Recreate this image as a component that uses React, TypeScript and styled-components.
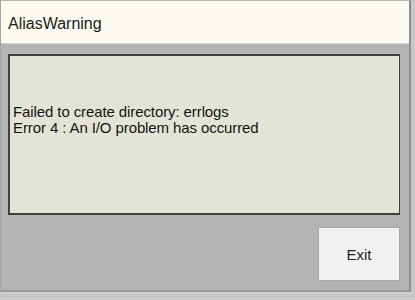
import React from "react";
import styled, { createGlobalStyle } from "styled-components";

const GlobalStyle = createGlobalStyle`
  html, body {
    margin: 0;
    padding: 0;
    background: #c4c4c4;
    font-family: "Liberation Sans", Arial, sans-serif;
  }
`;

const Desktop = styled.div`
  width: 415px;
  height: 300px;
  overflow: hidden;
  background: #c6c6c6;
  display: flex;
  flex-direction: column;
`;

const Window = styled.div`
  width: 411px;
  height: 292px;
  box-sizing: border-box;
  border-top: 1px solid #b8b8b8;
  border-left: 1px solid #a4a4a4;
  border-right: 2px solid #8e8e8e;
  border-bottom: 2px solid #999999;
  background: #b4b4b4;
  display: flex;
  flex-direction: column;
`;

const TitleBar = styled.div`
  height: 43px;
  flex-shrink: 0;
  box-sizing: border-box;
  background: #fdfaf1;
  border-bottom: 1px solid #d8d6cf;
  padding: 3px 0 0 7px;
  display: flex;
  align-items: center;
  font-size: 16px;
  color: #1a1a1a;
`;

const Body = styled.div`
  flex: 1;
  display: flex;
  flex-direction: column;
  padding: 10px 9px 0 7px;
`;

const MessagePanel = styled.div`
  height: 161px;
  box-sizing: border-box;
  background: #e3e4d7;
  border: 2px solid #3f403c;
  border-right-width: 1px;
  display: flex;
  flex-direction: column;
  padding: 48px 0 0 3px;
`;

const MessageLine = styled.div`
  font-size: 15px;
  line-height: 16px;
  color: #141414;
  letter-spacing: -0.1px;
`;

const Footer = styled.div`
  display: flex;
  justify-content: flex-end;
  padding-top: 12px;
`;

const ExitButton = styled.button`
  width: 82px;
  height: 54px;
  box-sizing: border-box;
  background: #f1f1f1;
  border: 1px solid #a7a7a7;
  font-family: "Liberation Sans", Arial, sans-serif;
  font-size: 15px;
  color: #1e1e1e;
  padding: 0;
`;

const BottomStrip = styled.div`
  flex: 1;
  border-top: 1px solid #d2d2d2;
  background: linear-gradient(#c9c9c9 0 3px, #b9b9b9 3px 4px, #cbcbcb 4px);
`;

export default function App() {
  return (
    <>
      <GlobalStyle />
      <Desktop>
        <Window>
          <TitleBar>AliasWarning</TitleBar>
          <Body>
            <MessagePanel>
              <MessageLine>Failed to create directory: errlogs</MessageLine>
              <MessageLine>Error 4 : An I/O problem has occurred</MessageLine>
            </MessagePanel>
            <Footer>
              <ExitButton>Exit</ExitButton>
            </Footer>
          </Body>
        </Window>
        <BottomStrip />
      </Desktop>
    </>
  );
}
